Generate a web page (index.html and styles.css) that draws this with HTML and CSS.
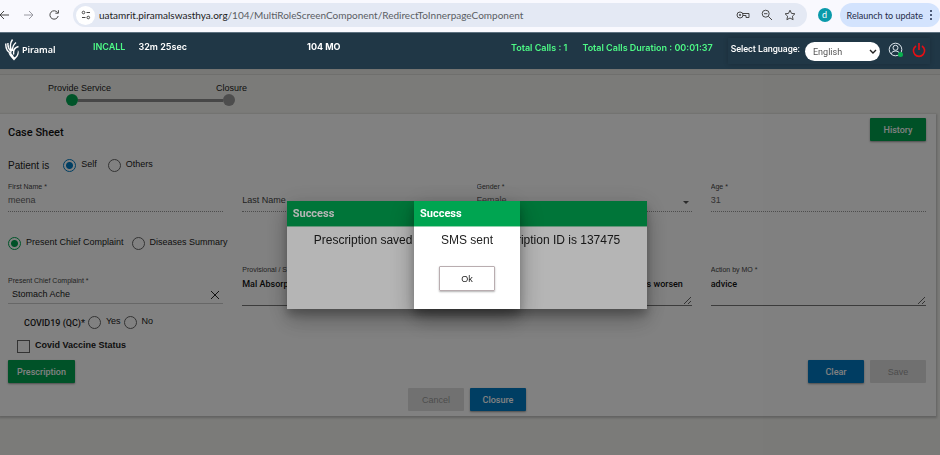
FILE: index.html
```html
<!DOCTYPE html>
<html lang="en">

<head>
    <meta charset="UTF-8">
    <meta name="viewport" content="width=device-width, initial-scale=1.0">
    <title>104 MO</title>
    <link rel="stylesheet" href="styles.css">
</head>

<body>
    <div class="browser">
        <button class="nav-btn" aria-label="Back">
            <svg width="12" height="12" viewBox="0 0 12 12"><path d="M11 6H2M6 2L2 6l4 4" /></svg>
        </button>
        <button class="nav-btn nav-off" aria-label="Forward">
            <svg width="12" height="12" viewBox="0 0 12 12"><path d="M1 6h9M6 2l4 4-4 4" /></svg>
        </button>
        <button class="nav-btn" aria-label="Reload">
            <svg width="12" height="12" viewBox="0 0 12 12"><path d="M9.6 3.6A4.2 4.2 0 1 0 10.2 7M10.4 1.2v3H7.4" /></svg>
        </button>
        <div class="address">
            <span class="site-info">
                <svg width="10" height="10" viewBox="0 0 10 10"><path d="M5.5 2.5H9M1 7.5h3.5" /><circle cx="2.5" cy="2.5" r="1.3" /><circle cx="7.3" cy="7.5" r="1.3" /></svg>
            </span>
            <span class="url">uatamrit.piramalswasthya.org<span class="path">/104/MultiRoleScreenComponent/RedirectToInnerpageComponent</span></span>
            <div class="address-icons">
                <svg width="14" height="12" viewBox="0 0 14 12"><circle cx="4" cy="6" r="3" /><circle cx="4" cy="6" r="0.7" /><path d="M7 4.5h6v4h-3v-2H7" /></svg>
                <svg width="12" height="12" viewBox="0 0 12 12"><circle cx="4.7" cy="4.7" r="3.5" /><path d="M7.4 7.4L11 11M3 4.7h3.4" /></svg>
                <svg width="12" height="12" viewBox="0 0 12 12"><path d="M6 1.2l1.5 3.2 3.4.4-2.5 2.4.7 3.5L6 9l-3.1 1.7.7-3.5L1.1 4.8l3.4-.4z" /></svg>
            </div>
        </div>
        <span class="avatar">d</span>
        <button class="relaunch">Relaunch to update
            <svg width="4" height="12" viewBox="0 0 4 12"><circle cx="2" cy="2" r="1" /><circle cx="2" cy="6" r="1" /><circle cx="2" cy="10" r="1" /></svg>
        </button>
    </div>

    <header class="header">
        <div class="logo">
            <svg width="16" height="24" viewBox="0 0 16 24">
                <path d="M9 22.5C7.5 20.5 4.5 18.5 3.5 15c2.5 0 4.5 1.5 5.2 3.5C9 20 11 19 12 16.5c.5-1.5 1-3 .8-4.5 1.5 1.5 1.2 4.500-.3 6.500z" />
                <path class="feather" d="M6.5 15.5C2.5 14 .5 10.5.8 5.5M6.5 14C3.5 11 2.5 8 3 5M6.8 13C5 9.500 5 5 7.500 1.500M7.500 13C7.300 9 8.500 6.500 11 4.500M8.800 16.500c-.8-4 1-7 4.700-8" />
            </svg>
            <span>Piramal</span>
        </div>
        <div class="call-state"><span class="green">INCALL</span><span>32m 25sec</span></div>
        <h1>104 MO</h1>
        <div class="totals green"><span>Total Calls : 1</span><span>Total Calls Duration : 00:01:37</span></div>
        <div class="tools">
            <label for="language">Select Language:</label>
            <div class="language">
                <select id="language">
                    <option>English</option>
                </select>
                <svg width="8" height="6" viewBox="0 0 8 6"><path d="M1 1l3 3 3-3" /></svg>
            </div>
            <button class="icon-btn" aria-label="Profile">
                <svg width="16" height="16" viewBox="0 0 16 16"><circle cx="7.5" cy="7.5" r="6.3" /><circle cx="7.5" cy="5.8" r="2.5" /><path d="M3 12c1-2.3 2.5-2.9 4.5-2.9S11 9.7 12 12" /><circle class="online" cx="12.5" cy="12.5" r="2.5" /></svg>
            </button>
            <button class="icon-btn power" aria-label="Logout">
                <svg width="14" height="16" viewBox="0 0 14 16"><path d="M4 4a5.6 5.6 0 1 0 6 0M7 1v7" /></svg>
            </button>
        </div>
    </header>

    <main>
        <div class="stepper">
            <div class="step-names"><span>Provide Service</span><span>Closure</span></div>
            <div class="track"><i class="dot active"></i><i class="line"></i><i class="dot"></i></div>
        </div>

        <form class="card">
            <div class="card-top">
                <h2>Case Sheet</h2>
                <button type="button" class="btn btn-green">History</button>
            </div>

            <div class="radio-row patient">
                <span class="patient-label">Patient is</span>
                <label><input type="radio" name="patient" class="blue" checked>Self</label>
                <label><input type="radio" name="patient">Others</label>
            </div>

            <div class="grid">
                <div class="field dotted">
                    <label for="firstName">First Name *</label>
                    <input type="text" id="firstName" value="meena" disabled>
                </div>
                <div class="field dotted no-label">
                    <input type="text" id="lastName" placeholder="Last Name" aria-label="Last Name" disabled>
                </div>
                <div class="field dotted">
                    <label for="gender">Gender *</label>
                    <div class="select-wrap">
                        <select id="gender" disabled>
                            <option>Female</option>
                        </select>
                        <i class="caret"></i>
                    </div>
                </div>
                <div class="field dotted">
                    <label for="age">Age *</label>
                    <input type="text" id="age" value="31" disabled>
                </div>
            </div>

            <div class="radio-row view">
                <label><input type="radio" name="view" checked>Present Chief Complaint</label>
                <label><input type="radio" name="view">Diseases Summary</label>
            </div>

            <div class="grid details">
                <div class="field complaint">
                    <label for="complaint">Present Chief Complaint *</label>
                    <div class="complaint-box">
                        <input type="text" id="complaint" value="Stomach Ache">
                        <button type="button" class="clear-x" aria-label="Clear complaint">
                            <svg width="10" height="10" viewBox="0 0 10 10"><path d="M1 1l8 8M9 1L1 9" /></svg>
                        </button>
                    </div>
                </div>
                <div class="field">
                    <label for="diagnosis">Provisional / Selected Diagnosis *</label>
                    <textarea id="diagnosis">Mal Absorption</textarea>
                </div>
                <div class="field">
                    <label for="remarks">Remarks</label>
                    <textarea id="remarks">Please consult the doctor if your symptoms worsen</textarea>
                </div>
                <div class="field">
                    <label for="action">Action by MO *</label>
                    <textarea id="action">advice</textarea>
                </div>
            </div>

            <div class="radio-row covid">
                <span class="covid-label">COVID19 (QC)*</span>
                <label><input type="radio" name="covid">Yes</label>
                <label><input type="radio" name="covid">No</label>
            </div>
            <label class="vaccine"><input type="checkbox">Covid Vaccine Status</label>

            <div class="actions">
                <button type="button" class="btn btn-green">Prescription</button>
                <button type="reset" class="btn btn-blue push">Clear</button>
                <button type="submit" class="btn" disabled>Save</button>
            </div>
            <div class="actions center">
                <button type="button" class="btn" disabled>Cancel</button>
                <button type="button" class="btn btn-blue">Closure</button>
            </div>
        </form>
    </main>

    <div class="backdrop">
        <div class="dialog" role="dialog" aria-labelledby="savedTitle">
            <h3 id="savedTitle">Success</h3>
            <p>Prescription saved successfully, Prescription ID is 137475</p>
        </div>
    </div>
    <div class="backdrop">
        <div class="dialog" role="dialog" aria-labelledby="smsTitle">
            <h3 id="smsTitle">Success</h3>
            <p>SMS sent</p>
            <button class="ok">Ok</button>
        </div>
    </div>
</body>

</html>
```

FILE: styles.css
```css
* {
    box-sizing: border-box;
    padding: 0;
    margin: 0;
}

body {
    min-height: 100vh;
    font-family: "Liberation Sans", Arial, sans-serif;
    font-size: 9px;
    color: #222;
    background-color: #f3f3ef;
    overflow: hidden;
}

button, input, select, textarea {
    font: inherit;
    color: inherit;
    border: none;
    background: none;
    outline: none;
}

svg {
    display: block;
    fill: none;
    stroke: currentColor;
}

/* browser bar */
.browser {
    height: 32px;
    display: flex;
    align-items: center;
    padding: 0 0 2px;
    background-color: #f9f9fe;
    color: #474747;
    font-family: Lato, "Open Sans", sans-serif;
}

.nav-btn {
    width: 25px;
    flex: none;
}

.nav-btn:first-child {
    margin-left: -2px;
}

.nav-off {
    color: #9a9aa2;
}

.address {
    flex: 1;
    height: 24px;
    margin-right: 11px;
    padding: 0 11px 0 3px;
    display: flex;
    align-items: center;
    border-radius: 12px;
    background-color: #e4e9f4;
}

.site-info {
    width: 19px;
    height: 19px;
    display: grid;
    place-items: center;
    margin-right: 4px;
    border-radius: 50%;
    background-color: #fff;
}

.url {
    font-size: 10px;
    color: #222;
}

.path {
    color: #5a5d63;
}

.address-icons {
    display: flex;
    gap: 11px;
    margin-left: auto;
}

.avatar {
    width: 14px;
    height: 14px;
    margin-right: 8px;
    border-radius: 50%;
    line-height: 13px;
    text-align: center;
    color: #fff;
    background-color: #0a9aaa;
}

.relaunch {
    height: 24px;
    display: flex;
    align-items: center;
    gap: 6px;
    padding: 0 7px;
    border-radius: 12px;
    background-color: #d3e3fd;
    color: #1f2c4a;
}

.relaunch svg {
    fill: currentColor;
    stroke: none;
}

/* application header */
.header {
    position: relative;
    z-index: 10;
    height: 37px;
    display: grid;
    grid-template-columns: 88px 214px 1fr auto auto;
    padding: 0 10px 0 5px;
    border-top: 1px solid #5d7180;
    background-color: #203746;
    color: #fff;
    font-family: Inter, "Liberation Sans", sans-serif;
    font-weight: 600;
    line-height: 12px;
}

.logo {
    display: flex;
    align-items: center;
    gap: 1px;
    height: 33px;
    font-family: "Noto Sans", sans-serif;
}

.logo svg {
    fill: #fff;
    stroke: none;
}

.logo .feather {
    fill: none;
    stroke: #fff;
    stroke-width: 1.4;
}

.green {
    color: #4dfa86;
}

.call-state {
    display: flex;
    gap: 13px;
    padding-top: 8px;
}

.header h1 {
    padding-top: 8px;
    font-size: 9px;
    line-height: 12px;
}

.totals {
    display: flex;
    gap: 15px;
    padding: 9px 15px 0 0;
}

.tools {
    height: 26px;
    display: flex;
    align-items: center;
    margin-top: 5px;
    padding: 0 4px 0 3px;
    font-family: Roboto, "Liberation Sans", sans-serif;
    font-weight: 500;
    box-shadow: 0 0 5px rgba(0, 0, 0, 0.2);
}

.tools label {
    padding-bottom: 5px;
}

.language {
    position: relative;
    width: 75px;
    margin: 1px 8px 0 5px;
    color: #555;
}

.language select {
    width: 100%;
    height: 19px;
    padding: 0 8px;
    appearance: none;
    border-radius: 10px;
    background-color: #fff;
    font-weight: 400;
}

.language svg {
    position: absolute;
    right: 3px;
    top: 7px;
    stroke: #222;
    stroke-width: 1.4;
}

.icon-btn {
    color: #dfe8ee;
    margin-bottom: 3px;
}

.icon-btn .online {
    fill: #09b04e;
    stroke: none;
}

.power {
    margin-left: 8px;
    color: #e80f14;
    stroke-width: 1.6;
}

/* progress */
.stepper {
    height: 45px;
    padding: 12px 0 0 48px;
    border-top: 1px solid #e6e6e2;
    box-shadow: inset 0 5px 0 -1px #eeeeea, inset 0 5px 0 #dcdcd8;
}

.step-names {
    width: 199px;
    display: flex;
    justify-content: space-between;
    line-height: 12px;
}

.track {
    width: 199px;
    display: flex;
    align-items: center;
    padding: 0 12px 0 18px;
}

.dot {
    width: 12px;
    height: 12px;
    border-radius: 50%;
    background-color: #999;
}

.dot.active {
    background-color: #00a651;
}

.line {
    flex: 1;
    height: 3px;
    background-color: #8c8c8c;
}

/* case sheet */
.card {
    margin-right: 4px;
    padding: 4px 10px 5px 8px;
    background-color: #fff;
    box-shadow: 0 1px 2px 1px rgba(0, 0, 0, 0.2);
}

.card-top {
    display: flex;
    justify-content: space-between;
}

.card h2 {
    padding-top: 7px;
    font-family: Roboto, "Liberation Sans", sans-serif;
    font-size: 11px;
    line-height: 16px;
    font-weight: 500;
    color: #111;
}

.btn {
    min-width: 56px;
    height: 23px;
    padding: 0 9px;
    border-radius: 1px;
    background-color: #e0e0e0;
    color: #999;
}

.btn-green,
.btn-blue {
    color: #fff;
    font-family: Roboto, "Liberation Sans", sans-serif;
    font-weight: 500;
    box-shadow: 0 1px 2px rgba(0, 0, 0, 0.4);
}

.btn-green {
    background-color: #00a24f;
}

.btn-blue {
    background-color: #007bc3;
}

.radio-row {
    height: 16px;
    display: flex;
    align-items: flex-start;
}

.radio-row label {
    display: flex;
    gap: 5px;
    line-height: 12px;
}

.patient {
    margin: 17px 0 8px;
    gap: 11px;
}

.patient-label {
    margin-right: 3px;
    font-size: 10px;
    line-height: 16px;
}

input[type="radio"],
input[type="checkbox"] {
    width: 13px;
    height: 13px;
    flex: none;
    margin-top: 1px;
    appearance: none;
    border: 1px solid #666;
}

input[type="radio"] {
    border-radius: 50%;
}

input[type="radio"]:checked {
    border-color: #00a651;
    background: radial-gradient(circle, #00a24f 3px, transparent 4px);
}

input.blue:checked {
    border-color: #007bc3;
    background: radial-gradient(circle, #007bc3 3px, transparent 4px);
}

.grid {
    display: grid;
    grid-template-columns: repeat(4, 1fr);
    gap: 19px;
}

.field {
    min-width: 0;
    display: flex;
    flex-direction: column;
}

.field > label {
    height: 10px;
    overflow: hidden;
    font-size: 7px;
    line-height: 10px;
    white-space: nowrap;
    color: #444;
}

.field input,
.field select {
    width: 100%;
    height: 17px;
    line-height: 17px;
}

.dotted {
    padding-bottom: 2px;
    border-bottom: 1px dotted #999;
    color: #666;
}

.dotted ::placeholder {
    color: #444;
}

.no-label {
    justify-content: flex-end;
}

.field select {
    appearance: none;
    opacity: 1;
}

.select-wrap {
    display: flex;
    align-items: center;
}

.caret {
    margin: 3px 3px 0 0;
    border: 3px solid transparent;
    border-top-color: #555;
    border-bottom: none;
}

.view {
    margin: 24px 0 13px;
    gap: 8px;
}

.field textarea {
    height: 31px;
    padding-top: 3px;
    font-family: Roboto, "Liberation Sans", sans-serif;
    line-height: 12px;
    font-weight: 500;
    color: #111;
    resize: vertical;
    border-bottom: 1px solid #777;
}

.complaint {
    padding-top: 11px;
}

.complaint-box {
    display: flex;
    align-items: center;
    padding: 0 3px 0 4px;
    border-bottom: 1px solid #ccc;
}

.covid {
    margin: 9px 0 8px 16px;
    gap: 3px;
}

.covid-label {
    font-family: Roboto, "Liberation Sans", sans-serif;
    font-weight: 500;
    line-height: 16px;
}

.vaccine {
    height: 14px;
    display: flex;
    gap: 5px;
    margin-left: 9px;
    font-weight: 700;
    line-height: 12px;
}

.actions {
    display: flex;
    gap: 6px;
    margin-top: 7px;
}

.push {
    margin-left: auto;
}

.center {
    margin-top: 5px;
    justify-content: center;
}

/* dialogs */
.backdrop {
    position: fixed;
    inset: 69px 0 0;
    display: flex;
    align-items: flex-start;
    justify-content: center;
    padding: 132px 6px 0 0;
    background-color: rgba(0, 0, 0, 0.29);
}

.dialog {
    min-height: 108px;
    background-color: #fff;
    text-align: center;
    box-shadow: 0 6px 8px rgba(0, 0, 0, 0.2), 0 12px 20px rgba(0, 0, 0, 0.2), 0 4px 24px rgba(0, 0, 0, 0.15);
}

.dialog h3 {
    height: 26px;
    padding-left: 6px;
    border-bottom: 1px solid #8fd3ad;
    background-color: #00a551;
    color: #fff;
    font-family: Roboto, "Liberation Sans", sans-serif;
    font-size: 11px;
    line-height: 25px;
    text-align: left;
}

.dialog p {
    padding: 4px 27px 0;
    font-size: 12px;
    line-height: 18px;
}

.ok {
    width: 56px;
    height: 25px;
    margin: 17px 0 18px;
    border: 1px solid #b9adb0;
    border-radius: 1px;
    box-shadow: 0 1px 2px rgba(0, 0, 0, 0.3);
}
```
